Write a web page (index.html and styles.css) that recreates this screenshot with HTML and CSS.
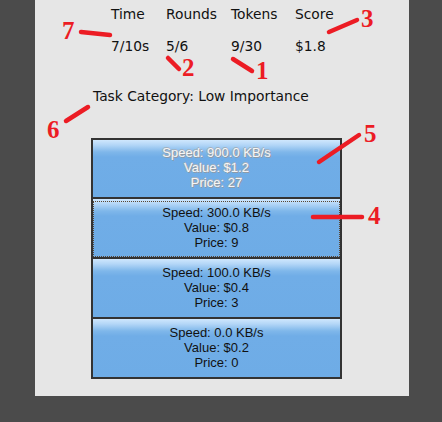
FILE: index.html
```html
<!DOCTYPE html>
<html>
<head>
<meta charset="utf-8">
<link rel="stylesheet" href="styles.css">
</head>
<body>
<div class="panel">
  <div class="stats">
    <div class="cell">Time</div>
    <div class="cell">Rounds</div>
    <div class="cell">Tokens</div>
    <div class="cell">Score</div>
    <div class="cell val">7/10s</div>
    <div class="cell val">5/6</div>
    <div class="cell val">9/30</div>
    <div class="cell val">$1.8</div>
  </div>
  <div class="category">Task Category: Low Importance</div>
  <div class="options">
    <button class="opt disabled">Speed: 900.0 KB/s<br>Value: $1.2<br>Price: 27</button>
    <button class="opt focused">Speed: 300.0 KB/s<br>Value: $0.8<br>Price: 9</button>
    <button class="opt">Speed: 100.0 KB/s<br>Value: $0.4<br>Price: 3</button>
    <button class="opt">Speed: 0.0 KB/s<br>Value: $0.2<br>Price: 0</button>
  </div>
</div>
<svg class="notes" width="442" height="422" viewBox="0 0 442 422">
  <g stroke="#ec1c24" stroke-width="4.5" stroke-linecap="round" fill="none">
    <line x1="81" y1="32" x2="110" y2="35"/>
    <line x1="168" y1="58" x2="179" y2="69"/>
    <line x1="233" y1="59" x2="252" y2="71"/>
    <line x1="329" y1="32" x2="357" y2="20"/>
    <line x1="66" y1="121" x2="88" y2="107"/>
    <line x1="319" y1="162" x2="359" y2="135"/>
    <line x1="313" y1="217" x2="362" y2="217"/>
  </g>
  <g class="num" fill="#ec1c24">
    <text x="62" y="39">7</text>
    <text x="182" y="76">2</text>
    <text x="256" y="79">1</text>
    <text x="361" y="27">3</text>
    <text x="47" y="138">6</text>
    <text x="364" y="142">5</text>
    <text x="368" y="224">4</text>
  </g>
</svg>
</body>
</html>
```
FILE: styles.css
```css
html, body {
  margin: 0;
  padding: 0;
}
body {
  background: #4b4b4b;
  width: 442px;
  height: 422px;
  overflow: hidden;
  position: relative;
}
.panel {
  margin-left: 35px;
  width: 374px;
  height: 396px;
  background: #e6e6e6;
  font-family: "DejaVu Sans", Verdana, sans-serif;
  font-size: 13.8px;
  line-height: 16px;
  color: #111;
  padding-top: 6px;
  box-sizing: border-box;
}
.stats {
  display: grid;
  grid-template-columns: 55px 65px 64px auto;
  row-gap: 16px;
  padding-left: 76px;
}
.category {
  margin-top: 34px;
  padding-left: 58px;
}
.options {
  margin-top: 34px;
  margin-left: 56px;
  width: 251px;
  display: flex;
  flex-direction: column;
}
.opt {
  display: block;
  width: 251px;
  height: 60px;
  margin: 0;
  padding: 0 0 2px 0;
  box-sizing: border-box;
  border: 2px solid #333;
  border-top-width: 0;
  background: linear-gradient(#cfe7fd 0px, #b3d6f7 5px, #7fb7ea 12px, #70ade7 17px, #6eace6 100%);
  font-family: "Liberation Sans", Arial, sans-serif;
  font-size: 13px;
  line-height: 15px;
  color: #111;
  text-align: center;
}
.opt:first-child {
  border-top-width: 2px;
  height: 61px;
}
.disabled {
  color: #f6f6f6;
  text-shadow: 1px 1px 0 #8e9aa6, -1px 0 0 #a3b0bc, 0 -1px 0 #a3b0bc;
}
.focused {
  outline: 1px dotted #5a4632;
  outline-offset: -3px;
}
.notes {
  position: absolute;
  left: 0;
  top: 0;
  pointer-events: none;
}
.num text {
  font-family: "Liberation Serif", "Times New Roman", serif;
  font-weight: bold;
  font-size: 25px;
}
```
